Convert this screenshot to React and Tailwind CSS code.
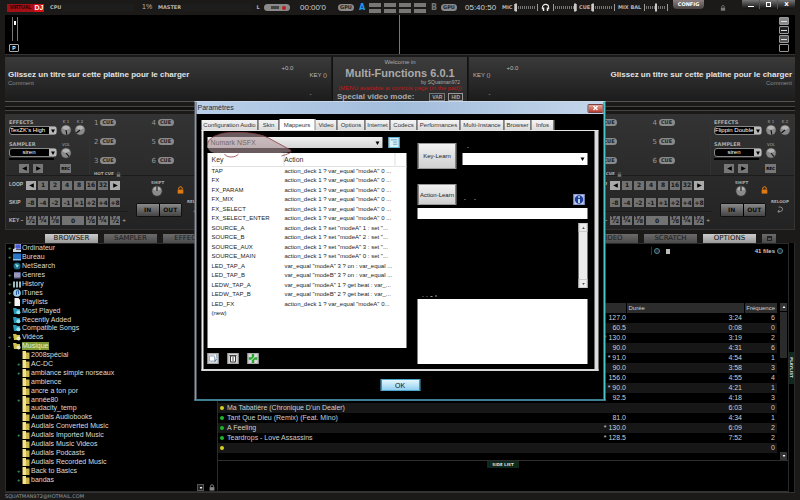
import React from "react";

const sans = "font-['Liberation_Sans',Arial,sans-serif]";
const tech = "font-['DejaVu_Sans',Verdana,sans-serif]";

function Lock({ className }) {
  return (
    <svg viewBox="0 0 8 9" className={className} aria-hidden="true">
      <path d="M2 4V2.8a2 2 0 0 1 4 0V4" fill="none" stroke="currentColor" strokeWidth="1.2" />
      <rect x="0.8" y="4" width="6.4" height="4.6" fill="currentColor" />
    </svg>
  );
}

function Knob({ angle, className }) {
  return (
    <svg viewBox="0 0 14 14" className={className} aria-hidden="true">
      <circle cx="7" cy="7" r="6.6" fill="#3a3a3a" />
      <circle cx="7" cy="7" r="5.6" fill="#8b8b8b" />
      <path d="M2.5 5a5 5 0 0 1 9 0L7 7z" fill="#b4b4b4" />
      <path d="M7 7V1.5" stroke="#111" strokeWidth="1.3" transform={`rotate(${angle} 7 7)`} />
    </svg>
  );
}

function Arrow({ dir, className }) {
  const d = { left: "M5 1L1 3l4 2z", right: "M1 1l4 2-4 2z", down: "M1 1.5h4L3 5z", up: "M1 4.5h4L3 1z" }[dir];
  return (
    <svg viewBox="0 0 6 6" className={className} aria-hidden="true">
      <path d={d} fill="currentColor" />
    </svg>
  );
}

function MiniSlider({ label, at }) {
  return (
    <svg viewBox="0 0 24 9" className="h-[9px] w-6 shrink-0" role="img" aria-label={label}>
      <path d="M0.5 1v7M23.5 1v7" stroke="#9a9a9a" />
      <path d="M2 4.5h20" stroke="#777" strokeWidth="3" strokeDasharray="1 1" />
      <rect x={at} y="0.5" width="2" height="8" fill="#c9c9c9" />
    </svg>
  );
}

function Pill({ children }) {
  return (
    <span className="flex h-[7px] w-4 shrink-0 items-center justify-center rounded-full bg-[#8a8a8a] text-[5px] font-bold leading-none text-[#222]">
      {children}
    </span>
  );
}

function TopBar() {
  return (
    <header className={`flex h-[15px] items-center whitespace-nowrap text-[5px] font-bold text-[#b5b5b5] ${tech}`}>
      <div className={`ml-[2px] flex h-2 w-[37px] shrink-0 items-center bg-[#a31015] text-[6px] leading-none ${sans}`}>
        <span className="flex w-[27px] justify-center text-[5px] text-[#1c0202]">VIRTUAL</span>
        <span className="flex h-full flex-1 items-center justify-center bg-[#d31218] text-[7px] text-white">DJ</span>
      </div>
      <span className="ml-[6px] w-3">CPU</span>
      <div className="h-[7px] w-[72px] bg-[#1d1d1d]" />
      <span className={`ml-2 w-4 text-[7px] font-normal ${sans}`}>1%</span>
      <span className="w-6">MASTER</span>
      <div className="h-[7px] min-w-4 flex-1 bg-[#1d1d1d]" />
      <span className="w-3 text-center">L</span>
      <div className="flex h-[7px] w-[26px] items-center justify-end gap-[3px] rounded-full bg-[#8a8a8a] px-1">
        <i className="h-[3px] w-2 bg-[#444]" />
        <i className="size-1 rounded-full bg-[#c11a1a]" />
      </div>
      <span className={`ml-[10px] w-[38px] text-[8px] font-normal text-[#cfcfcf] ${sans}`}>00:00'0</span>
      <Pill>GPU</Pill>
      <b className="ml-[5px] w-[10px] text-[8px] text-[#1c9cf0]">A</b>
      <div className="grid grid-cols-4 gap-x-[3px] gap-y-[2px]">
        {Array.from({ length: 8 }, (_, i) => <i key={i} className="h-1 w-3 bg-[#777]" />)}
      </div>
      <b className="ml-[5px] w-[10px] text-[8px] text-[#777]">B</b>
      <Pill>GPU</Pill>
      <span className={`ml-2 w-[37px] text-[8px] font-normal text-[#cfcfcf] ${sans}`}>05:40:50</span>
      <span className="w-3">MIC</span>
      <MiniSlider label="Mic volume" at={1} />
      <svg viewBox="0 0 10 10" className="mx-[3px] size-[9px] shrink-0" aria-hidden="true">
        <path d="M1.5 7V5a3.5 3.5 0 0 1 7 0v2" fill="none" stroke="#eee" strokeWidth="1.2" />
        <path d="M2.8 5v4M7.2 5v4" stroke="#eee" strokeWidth="1.6" />
      </svg>
      <MiniSlider label="Headphone volume" at={21} />
      <span className="ml-[2px] w-3">CUE</span>
      <MiniSlider label="Cue" at={1} />
      <span className="ml-[3px] w-[26px]">MIX BAL</span>
      <MiniSlider label="Balance" at={11} />
      <button className="ml-[5px] h-[9px] w-[31px] self-start rounded-b-sm bg-linear-to-b from-[#8d7f80] to-[#4b4343] text-[5px] leading-none text-white">
        CONFIG
      </button>
      <Lock className="mx-4 size-[6px] shrink-0 text-[#777]" />
      <div className="flex h-[9px] w-[53px] shrink-0 self-start overflow-hidden rounded-b-sm bg-linear-to-b from-[#777] to-[#111] text-[7px] leading-none text-white">
        <button aria-label="Minimize" className="flex flex-1 items-center justify-center"><i className="mt-1 h-px w-[6px] bg-white" /></button>
        <button aria-label="Maximize" className="flex flex-1 items-center justify-center border-x border-[#555]"><i className="size-[5px] border border-white" /></button>
        <button aria-label="Close" className="flex flex-1 items-center justify-center">x</button>
      </div>
    </header>
  );
}

function Wave() {
  return (
    <section className="flex h-10 border-b border-[#333] bg-black">
      <div className="flex flex-1 flex-col items-start border-r border-[#777] pl-1 pt-[2px]">
        <div className="ml-[3px] flex h-6 w-[6px] justify-center border-x border-[#777]"><i className="mt-1 h-1 w-[2px] bg-white" /></div>
        <button className="mt-[3px] flex h-2 w-[10px] items-center justify-center rounded-[1px] border border-[#aaa] text-[5px] font-bold leading-none text-white">P</button>
      </div>
      <div className="flex flex-1 flex-col items-end gap-px pr-[6px] pt-[2px]">
        {["bg-[#888]", "bg-[#222]", "bg-[#555]", "bg-black"].map((c, i) => (
          <button key={c} aria-label={`Wave view ${i + 1}`} className={`flex h-2 w-[10px] items-center justify-center rounded-[1px] border border-[#999] ${c}`}>
            {i < 3 && <i className="h-px w-[6px] bg-[#ddd]" />}
          </button>
        ))}
      </div>
    </section>
  );
}

function Deck({ right }) {
  return (
    <div className={`flex min-w-0 flex-1 justify-between border-b border-[#555] bg-linear-to-b from-[#3a3a3a] to-[#1c1c1c] ${right ? "flex-row-reverse text-right" : ""}`}>
      <div className="px-[3px] pt-[13px]">
        <h2 className="whitespace-nowrap text-[8px] font-bold leading-[10px] text-[#e2e2e2]">Glissez un titre sur cette platine pour le charger</h2>
        <p className="text-[6px] leading-[7px] text-[#888]">Comment</p>
      </div>
      <div className={`flex gap-4 pt-[7px] text-[6px] text-[#bbb] ${right ? "flex-row-reverse pl-1" : "pr-1"}`}>
        <span className="leading-[8px]">+0.0</span>
        <div className="pt-[8px] leading-[7px]">KEY ()<p className="pt-3">-</p></div>
      </div>
    </div>
  );
}

function DeckRow() {
  return (
    <section className="mt-[2px] flex h-[45px] gap-px">
      <Deck />
      <div className="w-[136px] shrink-0 overflow-hidden whitespace-nowrap border-x border-[#111] bg-linear-to-b from-[#3c3c3c] to-[#2a2a2a] px-px text-center text-[#aaa]">
        <p className="pt-[2px] text-[6px] leading-[7px]">Welcome in</p>
        <h1 className="text-[11px] font-bold leading-[14px]">Multi-Functions 6.0.1</h1>
        <p className="pr-[6px] text-right text-[5px] leading-[5px]">by SQuatman972</p>
        <p className="text-[6px] leading-[7px] text-[#c01818]">(MENU available at controls page (in the pad))</p>
        <div className="flex items-center justify-between px-[3px] text-[8px] font-bold leading-[9px]">
          <span>Special video mode:</span>
          <span className="flex gap-[3px] text-[5px] leading-[6px]">
            <b className="border border-[#777] px-[2px]">VAR</b><b className="border border-[#999] px-[2px]">HID</b>
          </span>
        </div>
      </div>
      <Deck right />
    </section>
  );
}

function DarkSelect({ label, value, id, center }) {
  return (
    <div>
      <label htmlFor={id} className="block text-[5px] font-bold leading-[7px] text-[#aaa]">{label}</label>
      <div className="relative h-[9px] w-[48px]">
        <select id={id} className={`block h-full w-full appearance-none rounded-[3px] border border-[#888] bg-black text-[6px] leading-[7px] text-white ${center ? "pr-2 text-center" : ""} ${sans}`}>
          <option>{value}</option>
        </select>
        <span className="pointer-events-none absolute inset-y-px right-px flex w-[7px] items-center justify-center bg-[#bbb] text-black"><Arrow dir="down" className="size-[6px]" /></span>
      </div>
    </div>
  );
}

function Effects({ side, value }) {
  return (
    <div className="flex w-[83px] shrink-0 gap-[3px] pl-[3px] pt-1">
      <div>
        <DarkSelect id={`fx-${side}`} label="EFFECTS" value={value} />
        <div className="mt-[6px]"><DarkSelect id={`sampler-${side}`} label="SAMPLER" value="siren" center /></div>
        <div className="mt-px h-[2px] w-[45px] bg-black" />
        <div className="mt-1 flex gap-1 pl-[10px]">
          {["left", "right"].map((d) => (
            <button key={d} aria-label={`Sample ${d}`} className="flex h-[9px] w-[10px] items-center justify-center bg-[#777] text-black"><Arrow dir={d} className="size-[7px]" /></button>
          ))}
        </div>
      </div>
      <div className="text-[4px] leading-[5px] text-[#aaa]">
        <div className="flex gap-[2px] text-center">
          <div>K 1<Knob angle={170} className="size-3" /></div>
          <div>K 2<Knob angle={230} className="size-3" /></div>
        </div>
        <div className="mt-[6px] w-3 text-center">VOL<Knob angle={140} className="size-3" /></div>
        <button className="mt-[5px] block h-[9px] w-[11px] bg-[#777] text-[4px] font-bold leading-none text-black">REC</button>
      </div>
    </div>
  );
}

function HotCues() {
  return (
    <div className="flex-1 border-x border-[#333] pl-1 pt-1">
      <div className="grid grid-cols-2">
        {[1, 4, 2, 5, 3, 6].map((n) => (
          <div key={n} className="flex h-[19px] items-start gap-[2px] text-[7px] leading-[8px] text-[#999]">
            <span className="w-1">{n}</span>
            <Pill>CUE</Pill>
          </div>
        ))}
      </div>
      <div className="-mt-[5px] flex items-center gap-[2px] text-[4px] font-bold leading-[6px] text-[#aaa]">HOT CUE<Lock className="size-[5px] text-[#777]" /></div>
    </div>
  );
}

const cell = "flex h-[9px] items-center justify-center bg-[#727272] text-[6px] font-bold leading-none text-[#161616]";

function LoopGrid() {
  const name = "w-[15px] shrink-0 whitespace-nowrap text-[5px] font-bold text-[#bbb] font-['Liberation_Sans',sans-serif]";
  const keys = ["½", "¼", "⅛"];
  return (
    <div className="w-[122px] shrink-0 pl-[3px]">
      <div className="flex h-[18px] items-center gap-[2px]">
        <span className={name}>LOOP</span>
        <button aria-label="Shorter loop" className="flex h-[9px] w-[10px] items-center justify-center bg-[#aaa] text-black"><Arrow dir="left" className="size-[7px]" /></button>
        {[1, 2, 4, 8, 16, 32].map((n) => <button key={n} className={`${cell} w-[10px]`}>{n}</button>)}
        <button aria-label="Longer loop" className="flex h-[9px] w-[10px] items-center justify-center bg-[#aaa] text-black"><Arrow dir="right" className="size-[7px]" /></button>
      </div>
      <div className="flex h-[18px] items-center gap-[2px] border-b border-[#1b1b1b]">
        <span className={name}>SKIP</span>
        {["-8", "-4", "-2", "-1", "+1", "+2", "+4", "+8"].map((n) => <button key={n} className={`${cell} w-[10px]`}>{n}</button>)}
      </div>
      <div className="flex h-[17px] items-center gap-[2px]">
        <span className={name}>KEY –</span>
        {keys.map((n) => <button key={n} className={`${cell} w-[10px] text-[8px]`}>{n}</button>)}
        <button className={`${cell} w-[22px]`}>0</button>
        {[...keys].reverse().map((n) => <button key={n} className={`${cell} w-[10px] text-[8px]`}>{n}</button>)}
        <span className="text-[5px] text-[#bbb]">+</span>
      </div>
    </div>
  );
}

function InOut() {
  return (
    <div className="flex-1 pl-2 text-[4px] font-bold text-[#aaa]">
      <div className="flex items-end pl-[15px]">
        <div className="w-3 pt-1 text-center leading-[5px]">SHIFT<Knob angle={0} className="size-3" /></div>
        <Lock className="mb-[3px] ml-[14px] h-[8px] w-[7px] text-[#e07a10]" />
      </div>
      <div className="mt-[6px] flex items-center gap-[5px]">
        <div className="flex w-[46px] shrink-0 gap-px rounded-[2px] border border-[#111] bg-black">
          {["IN", "OUT"].map((t) => <button key={t} className="h-3 flex-1 bg-linear-to-b from-[#8a8a8a] to-[#444] text-[6px] font-bold leading-none text-[#0b0b0b]">{t}</button>)}
        </div>
        <div className="-mt-2 text-center leading-[5px]">RELOOP
          <svg viewBox="0 0 8 8" className="mx-auto mt-[2px] size-[7px]" aria-hidden="true"><path d="M3 1.2h2a2.5 2.5 0 0 1 0 5H2.5M4 4.5L2 6.2 4 8" fill="none" stroke="#999" strokeWidth="1" /></svg>
        </div>
      </div>
    </div>
  );
}

function DeckControls({ side, value }) {
  return (
    <div className={`w-[206px] shrink-0 border border-[#333] bg-linear-to-b from-[#333] to-[#232323] ${tech}`}>
      <div className="flex h-[61px] border-b border-[#1b1b1b]">
        {side === "left" && <Effects side={side} value={value} />}
        <HotCues />
        {side === "right" && <Effects side={side} value={value} />}
      </div>
      <div className="flex h-[53px]"><LoopGrid /><InOut /></div>
    </div>
  );
}

function Tab({ active, children, label }) {
  return (
    <button aria-label={label} className={`flex h-[9px] items-center justify-center overflow-hidden text-[7px] leading-none ${label ? "w-[14px]" : "w-[53px]"} ${active ? "bg-linear-to-b from-[#ccc] to-[#999] text-[#111]" : "bg-linear-to-b from-[#6b6b6b] to-[#4b4b4b] text-[#1b1b1b]"}`}>
      {children}
    </button>
  );
}

function Tabs() {
  return (
    <nav className={`mt-1 flex justify-between pl-10 pr-[19px] ${tech}`}>
      <div className="flex gap-[6px]"><Tab active>BROWSER</Tab><Tab>SAMPLER</Tab><Tab>EFFECTS</Tab></div>
      <div className="flex gap-[6px]">
        <Tab>VIDEO</Tab><Tab>SCRATCH</Tab><Tab active>OPTIONS</Tab>
        <Tab label="Detach"><i className="size-[5px] border border-t-2 border-[#222]" /></Tab>
      </div>
    </nav>
  );
}

const roots = [
  ["Ordinateur", "pc", 1], ["Bureau", "desk", 1], ["NetSearch", "net"], ["Genres", "list", 1], ["History", "book", 1],
  ["iTunes", "disc", 1], ["Playlists", "page", 1], ["Most Played", "teal"], ["Recently Added", "teal"],
  ["Compatible Songs", "teal"], ["Vidéos", "fav", 1], ["Musique", "fav", 1],
];
const folders = [
  ["2008spécial"], ["AC-DC", 1], ["ambiance simple norseaux", 1], ["ambience"], ["ancre a ton por"], ["année80", 1],
  ["audacity_temp"], ["Audials Audiobooks"], ["Audials Converted Music"], ["Audials Imported Music", 1],
  ["Audials Music Videos"], ["Audials Podcasts"], ["Audials Recorded Music"], ["Back to Basics", 1], ["bandas", 1],
];

function TreeIcon({ kind }) {
  const shapes = {
    pc: <><rect x="2" width="6" height="5" fill="#4a5ad8" stroke="#ccd" strokeWidth=".8" /><path d="M0 5l3-1v4H0zM3 6h5v2H3z" fill="#c8d4e8" /></>,
    desk: <><rect y="0.5" width="8" height="6.5" fill="#2b74c4" /><path d="M0 6h8v1.5H0z" fill="#8fc1ee" /></>,
    net: <><circle cx="4" cy="4" r="3.5" fill="#1c6a8a" /><path d="M2 2l4 1-2 3z" fill="#8fe0d8" /></>,
    list: <><rect x="1" y="1" width="6.5" height="6.5" fill="#6b6b9c" /><path d="M1 3h6.5M1 5h6.5" stroke="#dde" strokeWidth=".8" /></>,
    book: <path d="M0 1.5h2v6H0zM3 1.5h2v6H3zM6 1.5h2v6H6z" fill="#9fb8c0" />,
    disc: <><circle cx="4" cy="4" r="3.8" fill="#9fcbe4" /><path d="M3.5 6V2l2-.5v3.6" stroke="#2a62a8" fill="none" /></>,
    page: <path d="M1.5 0h4L7 2v6H1.5z" fill="#f4f4f4" />,
    teal: <><path d="M0 1h3l1 1h3v5H1z" fill="#2a98b4" /><circle cx="5.4" cy="5.2" r="2" fill="#8fe2ee" /></>,
    fav: <><path d="M0 1h3l1 1h3v5H1z" fill="#cfc04a" /><circle cx="5.6" cy="5.4" r="2" fill="#e8e6c8" /></>,
    folder: <><path d="M.5 0H4v8H.5z" fill="#f3e38a" /><path d="M4 1.5h3.5V8H4z" fill="#cbb44e" /></>,
  };
  return <svg viewBox="0 0 8 8" className="size-2 shrink-0" aria-hidden="true">{shapes[kind]}</svg>;
}

function TreeRow({ name, kind, open, child }) {
  return (
    <li className={`flex items-center ${child ? "pl-[11px]" : "pl-[2px]"}`}>
      <span className="w-[5px] text-[6px] font-bold leading-none text-[#4f9a5c]">{open ? (name === "Musique" ? "-" : "+") : ""}</span>
      <TreeIcon kind={kind} />
      <span className={name === "Musique" ? "ml-px bg-[#7f9a35] pr-px text-[#e9f0c8]" : "ml-px"}>{name}</span>
    </li>
  );
}

function Tree() {
  return (
    <aside className="flex w-[213px] shrink-0 flex-col border border-[#2a2a2a] bg-black text-[7px] leading-[8px] text-[#dcdcdc]">
      <ul className="grid h-[241px] auto-rows-fr whitespace-nowrap">
        {roots.map(([n, k, o]) => <TreeRow key={n} name={n} kind={k} open={o} />)}
        {folders.map(([n, o]) => <TreeRow key={n} name={n} kind="folder" open={o} child />)}
      </ul>
      <div className="flex items-center justify-end gap-[5px] pr-[2px]">
        <button aria-label="Tree options" className="flex size-[7px] items-center justify-center border border-[#555] bg-[#222] text-white"><Arrow dir="down" className="size-1" /></button>
        <Lock className="h-[7px] w-[6px] text-[#888]" />
      </div>
    </aside>
  );
}

const tracks = [
  ["", "", "127.0", "3:24", 6], ["", "", "60.5", "0:08", 0], ["", "", "* 130.0", "3:19", 2], ["", "", "90.0", "4:31", 6],
  ["", "", "* 91.0", "4:54", 1], ["", "", "90.0", "3:58", 3], ["", "", "156.0", "4:55", 4], ["", "", "* 90.0", "4:21", 1],
  ["", "", "92.5", "4:18", 3], ["y", "Ma Tabatière (Chronique D'un Dealer)", "", "6:03", 0],
  ["g", "Tant Que Dieu (Remix) (Feat. Mino)", "81.0", "4:34", 1], ["g", "A Feeling", "* 130.0", "6:09", 2],
  ["g", "Teardrops - Love Assassins", "* 128.5", "7:52", 2], ["y", "", "", "", 0],
];

function TrackList() {
  return (
    <main className="flex min-w-0 flex-1 flex-col border-b border-[#333] bg-black">
      <div className="flex h-[15px] items-center justify-end border-t border-[#2a2a2a] pr-[5px] text-[6px] font-bold text-[#ccc]">
        <div className="mr-auto ml-[200px] h-2 flex-1 border-r border-[#333]" />
        <div className="flex w-[131px] items-center gap-[6px] pl-[2px]">
          <i className="size-[6px] rounded-full border border-[#4a8a90] bg-[#223]" />
          <i className="h-[5px] w-1 bg-[#bbb]" />
          <span className="ml-auto">41 files</span>
          <i className="-ml-1 size-[6px] rounded-full border border-[#4a8a90] bg-[#223]" />
        </div>
      </div>
      <div className="mt-[45px] flex h-[158px] border-b border-[#2e2e2e]">
        <table className="h-[150px] flex-1 table-fixed border-collapse text-[7px] leading-[10px] text-[#cfcfcf]">
          <colgroup><col /><col className="w-[50px]" /><col className="w-[118px]" /><col className="w-[33px]" /></colgroup>
          <thead>
            <tr className="h-[10px] bg-[#2c2c2c] text-[6px]">
              <th aria-label="Titre" className="p-0" />
              <th aria-label="BPM" className="p-0" />
              <th className="border-l border-black p-0 pl-[2px] text-left font-normal">Durée</th>
              <th className="border-l border-black p-0 pr-[2px] text-right font-normal">Fréquence</th>
            </tr>
          </thead>
          <tbody>
            {tracks.map(([dot, title, bpm, time, freq], i) => (
              <tr key={i} className="h-[10px] odd:bg-black even:bg-[#171717]">
                <td className="whitespace-nowrap p-0">
                  <span className="flex items-center gap-[3px] pl-[2px]">
                    {dot && <i className={`size-[4px] rounded-full ${dot === "y" ? "bg-[#d8d020]" : "bg-[#18b828]"}`} />}
                    {title}
                  </span>
                </td>
                <td className="whitespace-nowrap p-0 text-right">{bpm}</td>
                <td className="p-0 pr-[2px] text-right">{time}</td>
                <td className="p-0 pr-[2px] text-right">{freq}</td>
              </tr>
            ))}
          </tbody>
        </table>
        <div className="ml-[3px] mr-px flex w-[7px] flex-col items-center justify-between bg-black text-white">
          <div className="w-full">
            <span className="flex h-2 items-center justify-center bg-[#333]"><Arrow dir="up" className="size-1" /></span>
            <div className="mt-px h-[46px] bg-[#2b2b2b]" />
          </div>
          <span className="flex h-2 w-full items-center justify-center bg-[#333]"><Arrow dir="down" className="size-1" /></span>
        </div>
      </div>
      <button className={`mx-auto h-[7px] w-8 bg-[#10291f] text-[4px] font-bold leading-none text-[#ddd] ${tech}`}>SIDE LIST</button>
    </main>
  );
}

/* ---------- settings dialog ---------- */

const mappings = [
  ["TAP", 'action_deck 1 ? var_equal "modeA" 0 ...'], ["FX", 'action_deck 1 ? var_equal "modeA" 0 ...'],
  ["FX_PARAM", 'action_deck 1 ? var_equal "modeA" 0 ...'], ["FX_MIX", 'action_deck 1 ? var_equal "modeA" 0 ...'],
  ["FX_SELECT", 'action_deck 1 ? var_equal "modeA" 0 ...'], ["FX_SELECT_ENTER", 'action_deck 1 ? var_equal "modeA" 0 ...'],
  ["SOURCE_A", 'action_deck 1 ? set "modeA" 1 : set "...'], ["SOURCE_B", 'action_deck 1 ? set "modeA" 2 : set "...'],
  ["SOURCE_AUX", 'action_deck 1 ? set "modeA" 3 : set "...'], ["SOURCE_MAIN", 'action_deck 1 ? set "modeA" 0 : set "...'],
  ["LED_TAP_A", 'var_equal "modeA" 3 ? on : var_equal ...'], ["LED_TAP_B", 'var_equal "modeB" 3 ? on : var_equal ...'],
  ["LEDW_TAP_A", 'var_equal "modeA" 1 ? get beat : var_...'], ["LEDW_TAP_B", 'var_equal "modeB" 2 ? get beat : var_...'],
  ["LED_FX", 'action_deck 1 ? var_equal "modeA" 0...'], ["(new)", ""],
];

const dialogTabs = [
  ["Configuration Audio", "w-[57px]"], ["Skin", "w-[21px]"], ["Mappeurs", "w-[36px]"], ["Video", "w-[22px]"],
  ["Options", "w-[28px]"], ["Internet", "w-[25px]"], ["Codecs", "w-[27px]"], ["Performances", "w-[43px]"],
  ["Multi-Instance", "w-[44px]"], ["Browser", "w-[27px]"], ["Infos", "w-[23px]"],
];

function MappingTable() {
  return (
    <div className="mt-[5px] h-[195px] w-[199px] bg-white pl-1 text-[#1c1c1c]">
      <table className="w-full table-fixed border-collapse text-[6px] leading-[9px]">
        <colgroup><col className="w-[72px]" /><col /><col className="w-3" /></colgroup>
        <thead>
          <tr className="h-[13px] border-b border-[#e2e2e2] text-left text-[7px] text-[#333]">
            <th className="p-0 font-normal">Key</th>
            <th className="border-x border-[#dedede] p-0 font-normal">Action</th>
            <th aria-label="Other" className="p-0" />
          </tr>
        </thead>
      </table>
      <table className="h-[152px] w-full table-fixed border-collapse whitespace-nowrap text-[6px] leading-[9px]">
        <colgroup><col className="w-[73px]" /><col /></colgroup>
        <tbody>
          {mappings.map(([k, a]) => <tr key={k}><td className="p-0">{k}</td><td className="p-0">{a}</td></tr>)}
        </tbody>
      </table>
    </div>
  );
}

const iconBtn = "flex size-[11px] items-center justify-center border border-[#aaa] bg-[#d8d8d8]";
const grayBtn = "w-[39px] shrink-0 whitespace-nowrap border border-[#999] bg-linear-to-b from-[#f2f2f2] to-[#cfcfcf] text-[6px] leading-none text-[#222]";

function MapperLeft() {
  return (
    <div>
      <div className="relative flex items-center gap-[6px]">
        <div className="relative h-[11px] w-[175px]">
          <select aria-label="Mapper" className="block h-full w-full appearance-none bg-linear-to-b from-[#f0f0f0] to-[#d4d4d4] pl-[3px] text-[7px] leading-[11px] text-[#111]"><option>Numark NSFX</option></select>
          <Arrow dir="down" className="pointer-events-none absolute right-[2px] top-[3px] size-[6px] text-black" />
        </div>
        <button aria-label="Mapper details" className="flex size-[11px] items-center justify-center border border-[#5fb6d8] bg-[#d9f0f8]">
          <svg viewBox="0 0 8 8" className="size-[7px]" aria-hidden="true"><path d="M0 1h8M3 3.5h5M3 6h5" stroke="#5d9cbc" /></svg>
        </button>
        <svg viewBox="0 0 86 28" className="pointer-events-none absolute -left-px -top-[5px] h-7 w-[86px]" aria-hidden="true">
          <path d="M1 13C1 7 8 3 18 1C34-1 52 1 62 6L84 18C86 20 80 21 72 21H8C3 20 1 17 1 13z" fill="#b09a9c" fillOpacity=".6" />
          <path d="M18 1C34-1 52 1 62 6L84 18C86 21 81 22 75 24M18 22C20 26 29 26 32 22M1 13C1 7 8 3 18 1" fill="none" stroke="#8c3b42" strokeWidth=".8" />
        </svg>
      </div>
      <MappingTable />
      <div className="mt-[5px] flex gap-[9px]">
        <button aria-label="New mapper" className={iconBtn}><svg viewBox="0 0 9 9" className="size-[9px]"><path d="M1 2h5v5H1zM4 0h4v4" fill="#fff" stroke="#8fa6be" strokeWidth=".8" /><path d="M6 8l2-3" stroke="#4a7abf" /></svg></button>
        <button aria-label="Delete mapping" className={iconBtn}><svg viewBox="0 0 9 9" className="size-[9px]"><path d="M2 2h5v6H2z" fill="#fff" stroke="#333" /><path d="M1 1.5h7M4.5 3v4" stroke="#444" /></svg></button>
        <button aria-label="Reset mapping" className={iconBtn}><svg viewBox="0 0 9 9" className="size-[9px]"><path d="M4.5 0v9M0 4.5h9" stroke="#28a52c" strokeWidth="2.4" /><path d="M3 6l4-4" stroke="#d8f4d8" /></svg></button>
      </div>
    </div>
  );
}

function MapperRight() {
  return (
    <div className="flex-1 pt-[6px]">
      <div className="flex items-start gap-[6px]">
        <button className={`${grayBtn} h-[26px]`}>Key-Learn</button>
        <div className="flex-1">
          <i className="mb-[5px] ml-[5px] mt-1 block size-px bg-[#999]" />
          <div className="relative h-3">
            <select aria-label="Key" className="block h-full w-full appearance-none bg-white" />
            <Arrow dir="down" className="pointer-events-none absolute right-[2px] top-[3px] size-[6px] text-black" />
          </div>
        </div>
      </div>
      <div className="mt-[15px] flex items-end">
        <button className={`${grayBtn} h-[21px]`}>Action-Learn</button>
        <i className="mb-[5px] ml-2 size-px bg-[#999]" />
        <i className="mb-[5px] ml-[9px] size-px bg-[#999]" />
        <button aria-label="Action help" className="ml-auto mr-[3px] flex size-[11px] items-center justify-center border border-[#8a9ad0] bg-[#c6d0f0]">
          <svg viewBox="0 0 9 9" className="size-[9px]"><circle cx="4.5" cy="4.5" r="4.2" fill="#1c3f9c" /><path d="M4.5 4v4M4.5 1.3v1.4" stroke="#fff" strokeWidth="1.5" /></svg>
        </button>
      </div>
      <input aria-label="Action" className="mt-[3px] block h-[11px] w-full bg-white px-[2px] text-[7px] text-black" />
      <div className="mt-1 flex h-[65px] justify-end">
        <div className="flex w-[9px] flex-col justify-between bg-[#ececec] text-[#555]">
          <span className="flex h-[9px] items-center justify-center border border-[#ccc]"><Arrow dir="up" className="size-1" /></span>
          <span className="flex h-[9px] items-center justify-center border border-[#ccc]"><Arrow dir="down" className="size-1" /></span>
        </div>
      </div>
      <div className="mt-[5px] flex h-[6px] items-center gap-[3px] pl-[5px]">
        <i className="size-px bg-[#777]" /><i className="size-px bg-[#777]" /><i className="h-px w-[2px] bg-[#999]" /><i className="h-[2px] w-px bg-[#999]" />
      </div>
      <textarea aria-label="Description" className="block h-[65px] w-full resize-none bg-white p-[2px] text-[7px] text-black" />
    </div>
  );
}

function SettingsDialog() {
  return (
    <div role="dialog" aria-label="Paramètres" className="absolute left-1/2 top-[101px] w-[411px] -translate-x-1/2 border-2 border-t border-b-[#3f7f92] border-l-[#8b98a3] border-r-[#4fc3c8] border-t-[#c8d8ea] bg-black">
      <div className="flex h-3 items-center justify-between bg-linear-to-r from-[#b9cfe8] via-[#a3bddc] to-[#c3d5ea] pl-px text-[7px] text-[#1c2c44]">
        <span>Paramètres</span>
        <button aria-label="Close" className="flex h-[9px] w-4 items-center justify-center rounded-[1px] border border-[#7a4040] bg-linear-to-b from-[#e2a59a] to-[#b83a2c]">
          <svg viewBox="0 0 6 6" className="size-[6px]"><path d="M1 1l4 4M5 1L1 5" stroke="#fff" strokeWidth="1.4" /></svg>
        </button>
      </div>
      <div className="px-[5px] pt-[5px]">
        <div role="tablist" className="flex items-end text-[6px] text-[#333]">
          {dialogTabs.map(([t, w]) => (
            <button key={t} role="tab" aria-selected={t === "Mappeurs"} className={`${w} flex shrink-0 items-center justify-center whitespace-nowrap border-r border-[#888] leading-none ${t === "Mappeurs" ? "h-[11px] bg-white" : "h-[10px] bg-linear-to-b from-[#f4f4f4] to-[#dcdcdc]"}`}>{t}</button>
          ))}
        </div>
        <div className="flex h-[241px] gap-[11px] border-b-2 border-l-2 border-r-4 border-t border-b-[#d8d8d8] border-l-[#f0f0f0] border-r-[#dcdcdc] border-t-[#e8e8e8] pl-1 pr-[7px] pt-[6px]">
          <MapperLeft />
          <MapperRight />
        </div>
        <div className="flex h-7 items-center justify-center">
          <button className="h-3 w-10 border border-[#4fa6cc] bg-linear-to-b from-[#e6f6fd] to-[#8fd0f0] text-[7px] leading-none text-[#111]">OK</button>
        </div>
      </div>
    </div>
  );
}

export default function App() {
  return (
    <div className={`relative min-h-screen overflow-hidden bg-[#1b1a18] pl-[5px] pr-[5px] ${sans}`}>
      <TopBar />
      <Wave />
      <DeckRow />
      <div className="mt-1 h-[5px] border-y border-[#444] bg-[#111]" />
      <section className="mt-[3px] flex justify-between bg-[#151515]">
        <DeckControls side="left" value="TexZK's High" />
        <DeckControls side="right" value="Flippin Double" />
      </section>
      <Tabs />
      <div className="flex h-[250px] border-b border-[#333]">
        <Tree />
        <TrackList />
        <div className={`flex w-[7px] shrink-0 items-center justify-center border-x border-[#2a2a2a] bg-black ${tech}`}>
          <button className="h-8 w-[5px] bg-[#10291f] text-[4px] font-bold leading-[5px] text-[#ddd] [writing-mode:vertical-rl]">PLAYLIST</button>
        </div>
      </div>
      <footer className={`whitespace-nowrap text-[5px] leading-[6px] text-[#999] ${tech}`}>SQUATMAN972@HOTMAIL.COM</footer>
      <SettingsDialog />
    </div>
  );
}
